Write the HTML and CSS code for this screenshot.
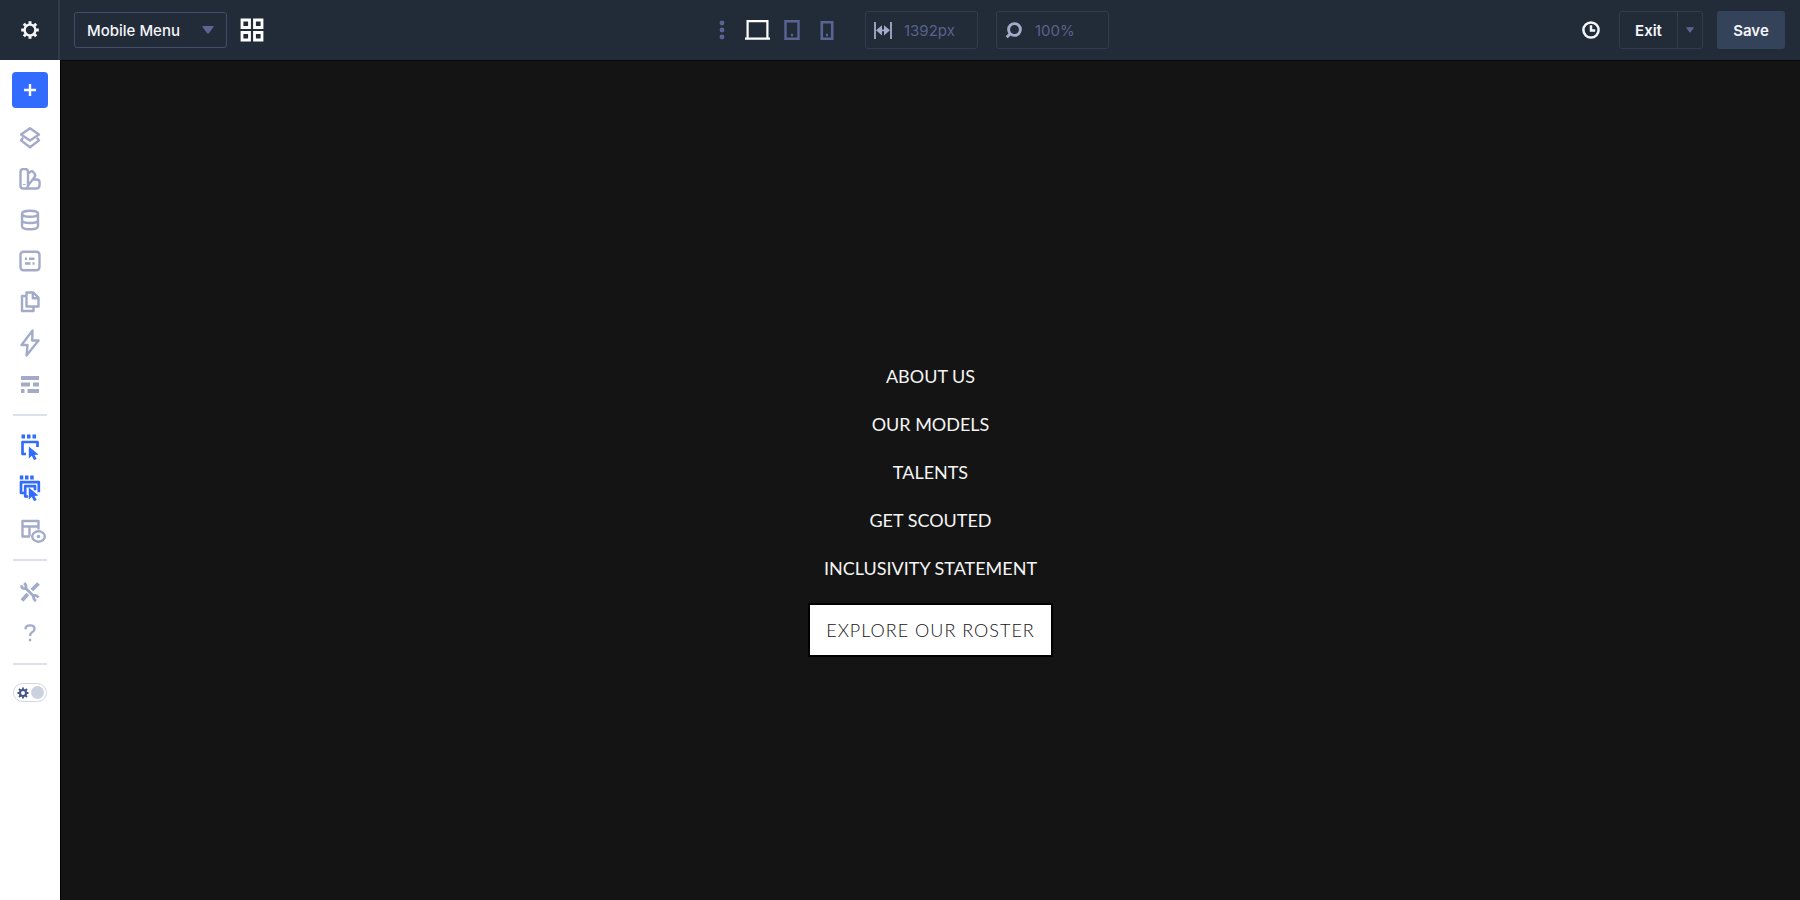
FILE: index.html
```html
<!DOCTYPE html>
<html lang="en">
<head>
    <meta charset="UTF-8">
    <meta name="viewport" content="width=device-width, initial-scale=1.0">
    <title>Mobile Menu</title>
    <link rel="stylesheet" href="styles.css">
</head>
<body>
    <header class="topbar">
        <button class="settings" aria-label="Settings">
            <svg width="20" height="20" viewBox="0 0 20 20" fill="none" stroke="currentColor">
                <circle cx="10" cy="10" r="5.4" stroke-width="2.4"/>
                <path stroke-width="3" d="M10 1.2v3M10 15.8v3M1.2 10h3M15.8 10h3M3.8 3.8l2 2M14.2 14.2l2 2M3.8 16.2l2-2M14.2 5.8l2-2"/>
            </svg>
        </button>

        <div class="bar">
            <div class="group left">
                <div class="select">
                    <select aria-label="Template">
                        <option>Mobile Menu</option>
                    </select>
                    <svg class="caret" width="12" height="8" viewBox="0 0 12 8" fill="currentColor"><path d="M1 0h10q1 0 .5 1L6.800 7.300q-.8.8-1.600 0L.5 1Q0 0 1 0z"/></svg>
                </div>
                <button class="icon-btn white" aria-label="Templates grid">
                    <svg width="24" height="24" viewBox="0 0 24 24" fill="none" stroke="currentColor" stroke-width="2.8"><path d="M2 2h7.500v7.500H2zM14.500 2H22v7.500h-7.500zM2 14.500h7.500V22H2zM14.500 14.500H22V22h-7.500z"/></svg>
                </button>
            </div>

            <div class="group center">
                <button class="dots" aria-label="More breakpoints">
                    <svg width="6" height="20" viewBox="0 0 6 20" fill="currentColor"><circle cx="3" cy="3" r="2.400"/><circle cx="3" cy="10" r="2.400"/><circle cx="3" cy="17" r="2.400"/></svg>
                </button>
                <div class="devices">
                    <button class="icon-btn white" aria-label="Desktop">
                        <svg width="25" height="20" viewBox="0 0 25 20" fill="none" stroke="currentColor" stroke-width="2.200"><path d="M2.600 18V1.200h19.800V18M0 18.700h25"/></svg>
                    </button>
                    <button class="icon-btn" aria-label="Tablet">
                        <svg width="16" height="20" viewBox="0 0 16 20" fill="none" stroke="currentColor" stroke-width="2.400"><path d="M1.500 1.200h13v17.600h-13zM7 15h2"/></svg>
                    </button>
                    <button class="icon-btn" aria-label="Phone">
                        <svg width="14" height="20" viewBox="0 0 14 20" fill="none" stroke="currentColor" stroke-width="2.600"><path d="M1.800 2.200h10.400v16.500H1.800zM6 15h2"/></svg>
                    </button>
                </div>
                <label class="field">
                    <svg width="18" height="18" viewBox="0 0 18 18" fill="none" stroke="currentColor" stroke-width="1.800"><path d="M1 1v17M17 1v17M5 9.300h8"/><path fill="currentColor" stroke="none" d="M2 9.300L8 4.200v10.200zM16 9.300L10 4.200v10.200z"/></svg>
                    <input type="text" value="1392px" aria-label="Canvas width">
                </label>
                <label class="field">
                    <svg width="18" height="18" viewBox="0 0 18 18" fill="none" stroke="currentColor" stroke-width="2.900"><circle cx="9.500" cy="8.500" r="5.900"/><path d="M5.500 12.500l-3.800 3.800"/></svg>
                    <input type="text" value="100%" aria-label="Zoom">
                </label>
            </div>

            <div class="group right">
                <button class="history" aria-label="History">
                    <svg width="18" height="18" viewBox="0 0 18 18" fill="none" stroke="currentColor" stroke-width="2.500"><circle cx="9" cy="9" r="7.600"/><path d="M9 4.200V9.500h4.200"/></svg>
                </button>
                <div class="exit">
                    <button class="exit-main">Exit</button>
                    <button class="exit-more" aria-label="Exit options">
                        <svg width="8" height="6" viewBox="0 0 12 8" fill="currentColor"><path d="M1 0h10q1 0 .5 1L6.800 7.300q-.8.8-1.600 0L.5 1Q0 0 1 0z"/></svg>
                    </button>
                </div>
                <button class="save">Save</button>
            </div>
        </div>
    </header>

    <div class="main">
        <nav class="sidebar" aria-label="Tools">
            <button class="add" aria-label="Add">
                <svg width="14" height="14" viewBox="0 0 14 14" fill="none" stroke="currentColor" stroke-width="2.400"><path d="M7 1v12M1 7h12"/></svg>
            </button>

            <div class="tools">
                <button class="tool" aria-label="Structure">
                    <svg width="22" height="22" viewBox="0 0 22 22"><path d="M11 1.200l9 6.200-9 6.200-9-6.200zM4 10.800l-2 2.600 9 6.900 9-6.900-2-2.600"/></svg>
                </button>
                <button class="tool" aria-label="Styles">
                    <svg width="22" height="22" viewBox="0 0 22 22"><rect x="1.500" y="1" width="7.500" height="19.500" rx="2.800"/><path d="M9 5.500l2-1.500q2-1.400 3.500.2l1 1.200q1.500 2-.2 4L9 17.500M13.500 11.500h3.800q3.300 0 3.300 3v2.500q0 3.500-3.500 3.500H6.500"/><path d="M5.200 16v1"/></svg>
                </button>
                <button class="tool" aria-label="Data">
                    <svg width="22" height="22" viewBox="0 0 22 22"><path d="M3 4.800c0-4 16-4 16 0s-16 4-16 0v12.400c0 4 16 4 16 0V4.800M3 11c0 4 16 4 16 0"/></svg>
                </button>
                <button class="tool" aria-label="Forms">
                    <svg width="22" height="22" viewBox="0 0 22 22"><rect x="1.500" y="1.800" width="19" height="18.400" rx="3"/><path d="M6 8.800h2M10 8.800h5.500M6 13.500h5.500M13.500 13.500h2"/></svg>
                </button>
                <button class="tool" aria-label="Pages">
                    <svg width="22" height="22" viewBox="0 0 22 22"><path d="M7.500 1.500h6.800l5.200 5.200v8.800h-12zM13.800 2v5.200h5.200M7 5H3v15h11.500v-4"/></svg>
                </button>
                <button class="tool" aria-label="Interactions">
                    <svg width="20" height="28" viewBox="0 0 20 28"><path d="M12.500 1.500L1.500 16h6L6.500 26.500 18.500 11.500h-6.300z"/></svg>
                </button>
                <button class="tool" aria-label="Presets">
                    <svg width="22" height="22" viewBox="0 0 22 22"><path class="thick" d="M2 5h18M2 11.500h9M14 11.500h6M2 18h3.500M8.500 18H20"/></svg>
                </button>
            </div>

            <div class="tools">
                <button class="tool blue" aria-label="Select element">
                    <svg width="22" height="26" viewBox="0 0 22 26"><path class="thick" d="M2.500 2.500h3.500M8 2.500h3.500M13.500 2.500H17"/><path class="mid" d="M7 20H3.500V8H18.500v5"/><path class="solid" d="M9.800 12.500l9.700 8-4 .6 2.200 4-2.700 1-2.200-4.300-3 2.700z"/></svg>
                </button>
                <button class="tool blue" aria-label="Select parent">
                    <svg width="22" height="26" viewBox="0 0 22 26"><path class="thick" d="M.8 2.500h3.500M6 2.500h3.500M11.200 2.500h3.500"/><path class="mid" d="M5 18H2V7.200H19.800v10"/><path class="mid" d="M9 21.500H6.200V11.200H16v4"/><path class="solid" d="M9.800 12.500l9.700 8-4 .6 2.200 4-2.700 1-2.200-4.300-3 2.700z"/></svg>
                </button>
                <button class="tool wide" aria-label="Show layout">
                    <svg width="26" height="24" viewBox="0 0 26 24"><path d="M10 17.500H2.500V2h16v8.500M2.500 7.500h16M9.500 7.500v10"/><ellipse cx="18.500" cy="17.500" rx="6.300" ry="5.200"/><circle class="solid" cx="18.500" cy="17.500" r="1.800"/></svg>
                </button>
            </div>

            <div class="tools">
                <button class="tool" aria-label="Tools">
                    <svg width="22" height="22" viewBox="0 0 22 22"><path class="mid" d="M6 6.500l9.500 9.500"/><path class="mid" d="M2.500 4.200q0 4 4 3.500Q8.200 5 5.200 2M14.500 14.500q3-1 5 2M14.800 15q-1 3 2.200 5"/><path class="thick" d="M19.500 2.500L12.800 9"/><path class="thick" d="M8.800 13L3 19.500"/></svg>
                </button>
                <button class="tool" aria-label="Help">
                    <svg width="14" height="18" viewBox="0 0 14 18"><path d="M2.500 5.200q0-3.800 4.500-3.800t4.500 3.500q0 2-2.400 3.300Q7 9.300 7 12M7 14.800v2.400"/></svg>
                </button>
            </div>

            <div class="tools">
                <label class="switch">
                    <input type="checkbox" aria-label="Dark mode">
                    <svg width="12" height="12" viewBox="0 0 12 12" fill="none" stroke="currentColor"><circle cx="6" cy="6" r="3" stroke-width="2"/><path stroke-width="1.800" d="M6 .5v2M6 9.500v2M.5 6h2M9.500 6h2M2 2l1.500 1.500M8.500 8.500L10 10M2 10l1.500-1.500M8.500 3.500L10 2"/></svg>
                    <span class="knob"></span>
                </label>
            </div>
        </nav>

        <main class="canvas">
            <a class="menu-link" href="#">ABOUT US</a>
            <a class="menu-link" href="#">OUR MODELS</a>
            <a class="menu-link" href="#">TALENTS</a>
            <a class="menu-link" href="#">GET SCOUTED</a>
            <a class="menu-link" href="#">INCLUSIVITY STATEMENT</a>
            <a class="roster" href="#">EXPLORE OUR ROSTER</a>
        </main>
    </div>
</body>
</html>
```
FILE: styles.css
```css
* {
    margin: 0;
    padding: 0;
    box-sizing: border-box;
}

body {
    display: flex;
    flex-direction: column;
    min-height: 100vh;
    font-family: Inter, "Liberation Sans", sans-serif;
    font-size: 15px;
}

button {
    display: flex;
    align-items: center;
    justify-content: center;
    background: none;
    border: none;
    color: inherit;
    font: inherit;
    cursor: pointer;
}

svg {
    display: block;
    flex-shrink: 0;
}

/* top bar */
.topbar {
    display: flex;
    height: 60px;
    background-color: #222b38;
    color: #f4f6fb;
}

.settings {
    width: 60px;
    padding-left: 2px;
    border-right: 2px solid #303a4b;
}

.bar {
    display: flex;
    flex: 1;
    align-items: center;
    justify-content: space-between;
    padding: 0 15px 0 14px;
}

.group {
    display: flex;
    align-items: center;
}

.left {
    gap: 13px;
}

.select {
    position: relative;
}

.select select {
    appearance: none;
    width: 153px;
    height: 36px;
    padding: 0 32px 0 12px;
    background-color: transparent;
    border: 1px solid #414c66;
    border-radius: 3px;
    color: inherit;
    font: inherit;
    font-weight: 500;
}

.caret {
    position: absolute;
    top: 14px;
    right: 13px;
    color: #5c6594;
    pointer-events: none;
}

.icon-btn {
    color: #5a6493;
}

.white {
    color: #ffffff;
}

.dots {
    width: 12px;
    color: #5a6493;
}

.devices {
    display: flex;
    align-items: center;
    gap: 14px;
    margin: 0 31px 0 17px;
}

.devices .icon-btn:last-child {
    margin-left: 6px;
}

.field {
    display: flex;
    align-items: center;
    gap: 12px;
    width: 113px;
    height: 38px;
    padding: 0 8px;
    border: 1px solid #323c4c;
    border-radius: 3px;
    color: #a3abc9;
}

.field + .field {
    margin-left: 18px;
}

.field input {
    width: 100%;
    min-width: 0;
    background: none;
    border: none;
    color: #59628c;
    font: inherit;
}

.history {
    width: 40px;
    height: 38px;
    margin: 0 8px 0 10px;
}

.exit {
    display: flex;
    width: 84px;
    height: 38px;
    margin-right: 14px;
    border: 1px solid #323c4c;
    border-radius: 3px;
    font-weight: 600;
}

.exit-main {
    flex: 1;
}

.exit-more {
    width: 25px;
    border-left: 1px solid #323c4c;
    color: #5c6594;
}

.save {
    width: 68px;
    height: 38px;
    background-color: #34435a;
    border-radius: 3px;
    font-weight: 600;
}

.main {
    display: flex;
    flex: 1;
}

/* sidebar */
.sidebar {
    display: flex;
    flex-direction: column;
    align-items: center;
    width: 60px;
    padding: 12px 0;
    background-color: #ffffff;
    color: #a3abc9;
}

.add {
    width: 36px;
    height: 36px;
    margin-bottom: 9px;
    background-color: #316bff;
    border-radius: 4px;
    color: #ffffff;
}

.tools + .tools {
    margin-top: 10px;
    padding-top: 10px;
    border-top: 2px solid #dde0ea;
}

.tools:last-child {
    padding-top: 18px;
}

.tool {
    width: 34px;
    height: 41px;
}

.wide {
    padding: 4px 0 0 6px;
}

.tool svg {
    fill: none;
    stroke: currentColor;
    stroke-width: 2.4;
    stroke-linejoin: round;
}

.tool .mid {
    stroke-width: 2.7;
}

.tool .thick {
    stroke-width: 3.8;
}

.tool .solid {
    fill: currentColor;
    stroke: none;
}

.tools .blue {
    color: #316bff;
}

.switch {
    display: flex;
    align-items: center;
    justify-content: space-between;
    width: 34px;
    height: 19px;
    padding: 0 2px 0 3px;
    border: 1px solid #d3d7e4;
    border-radius: 10px;
    color: #43548a;
}

.switch input {
    position: absolute;
    opacity: 0;
}

.knob {
    width: 13px;
    height: 13px;
    border-radius: 50%;
    background-color: #ccd1e0;
}

/* canvas */
.canvas {
    display: flex;
    flex: 1;
    flex-direction: column;
    align-items: center;
    justify-content: center;
    padding-top: 48px;
    background-color: #141414;
    border-top: 1px solid #0b0808;
    border-left: 1px solid #000000;
    font-family: Lato, "Open Sans", sans-serif;
    font-size: 18px;
}

.menu-link {
    padding: 12px 0;
    color: #f5f5f5;
    line-height: 24px;
    text-decoration: none;
}

.roster {
    margin-top: 11px;
    padding: 13px 16px;
    background-color: #ffffff;
    border: 2px solid #000000;
    color: #141414;
    font-weight: 300;
    line-height: 24px;
    letter-spacing: 1px;
    text-decoration: none;
}
```
